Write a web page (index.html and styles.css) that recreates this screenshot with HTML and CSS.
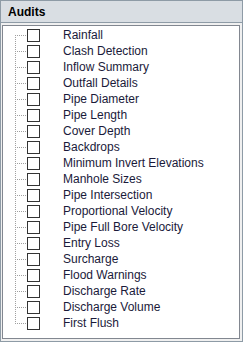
FILE: index.html
```html
<!DOCTYPE html>
<html>
<head>
<meta charset="utf-8">
<link rel="stylesheet" href="styles.css">
</head>
<body>
<div class="panel">
  <div class="header">Audits</div>
  <div class="body">
    <ul class="tree">
      <li class="row first"><span class="conn"></span><span class="box"></span><span class="label">Rainfall</span></li>
      <li class="row"><span class="conn"></span><span class="box"></span><span class="label">Clash Detection</span></li>
      <li class="row"><span class="conn"></span><span class="box"></span><span class="label">Inflow Summary</span></li>
      <li class="row"><span class="conn"></span><span class="box"></span><span class="label">Outfall Details</span></li>
      <li class="row"><span class="conn"></span><span class="box"></span><span class="label">Pipe Diameter</span></li>
      <li class="row"><span class="conn"></span><span class="box"></span><span class="label">Pipe Length</span></li>
      <li class="row"><span class="conn"></span><span class="box"></span><span class="label">Cover Depth</span></li>
      <li class="row"><span class="conn"></span><span class="box"></span><span class="label">Backdrops</span></li>
      <li class="row"><span class="conn"></span><span class="box"></span><span class="label">Minimum Invert Elevations</span></li>
      <li class="row"><span class="conn"></span><span class="box"></span><span class="label">Manhole Sizes</span></li>
      <li class="row"><span class="conn"></span><span class="box"></span><span class="label">Pipe Intersection</span></li>
      <li class="row"><span class="conn"></span><span class="box"></span><span class="label">Proportional Velocity</span></li>
      <li class="row"><span class="conn"></span><span class="box"></span><span class="label">Pipe Full Bore Velocity</span></li>
      <li class="row"><span class="conn"></span><span class="box"></span><span class="label">Entry Loss</span></li>
      <li class="row"><span class="conn"></span><span class="box"></span><span class="label">Surcharge</span></li>
      <li class="row"><span class="conn"></span><span class="box"></span><span class="label">Flood Warnings</span></li>
      <li class="row"><span class="conn"></span><span class="box"></span><span class="label">Discharge Rate</span></li>
      <li class="row"><span class="conn"></span><span class="box"></span><span class="label">Discharge Volume</span></li>
      <li class="row last"><span class="conn"></span><span class="box"></span><span class="label">First Flush</span></li>
    </ul>
  </div>
</div>
</body>
</html>
```
FILE: styles.css
```css
html, body {
  margin: 0;
  padding: 0;
  background: #f0f0f0;
}
.panel {
  width: 243px;
  height: 342px;
  box-sizing: border-box;
  border: 1px solid #8e9ba6;
  background: #f0f0f0;
  display: flex;
  flex-direction: column;
  font-family: "Liberation Sans", Arial, sans-serif;
}
.header {
  height: 19px;
  padding-top: 2px;
  border-bottom: 1px solid #8e9ba6;
  background: #d9dee3;
  font-weight: bold;
  font-size: 12px;
  line-height: 19px;
  padding-left: 7px;
  color: #000;
}
.body {
  flex: 1;
  padding: 2px 2px 2px 1px;
  display: flex;
}
.tree {
  flex: 1;
  margin: 0;
  padding: 1px 0 0;
  list-style: none;
  background: #fff;
  border: 1px solid #828790;
}
.row {
  height: 16px;
  display: flex;
  align-items: center;
}
.conn {
  width: 24px;
  height: 16px;
  flex: none;
  background:
    repeating-linear-gradient(to right, #a0a0a0 0 1px, transparent 1px 2px) 12px 8px / 12px 1px no-repeat,
    repeating-linear-gradient(to bottom, #a0a0a0 0 1px, transparent 1px 2px) 12px 0 / 1px 16px no-repeat;
}
.first .conn {
  background:
    repeating-linear-gradient(to right, #a0a0a0 0 1px, transparent 1px 2px) 12px 8px / 12px 1px no-repeat,
    repeating-linear-gradient(to bottom, #a0a0a0 0 1px, transparent 1px 2px) 12px 8px / 1px 8px no-repeat;
}
.last .conn {
  background:
    repeating-linear-gradient(to right, #a0a0a0 0 1px, transparent 1px 2px) 12px 8px / 12px 1px no-repeat,
    repeating-linear-gradient(to bottom, #a0a0a0 0 1px, transparent 1px 2px) 12px 0 / 1px 9px no-repeat;
}
.box {
  width: 13px;
  height: 13px;
  box-sizing: border-box;
  border: 1px solid #333;
  background: #fff;
  flex: none;
}
.label {
  margin-left: 23px;
  font-size: 12px;
  line-height: 16px;
  color: #1a1a3a;
  white-space: nowrap;
}
```
